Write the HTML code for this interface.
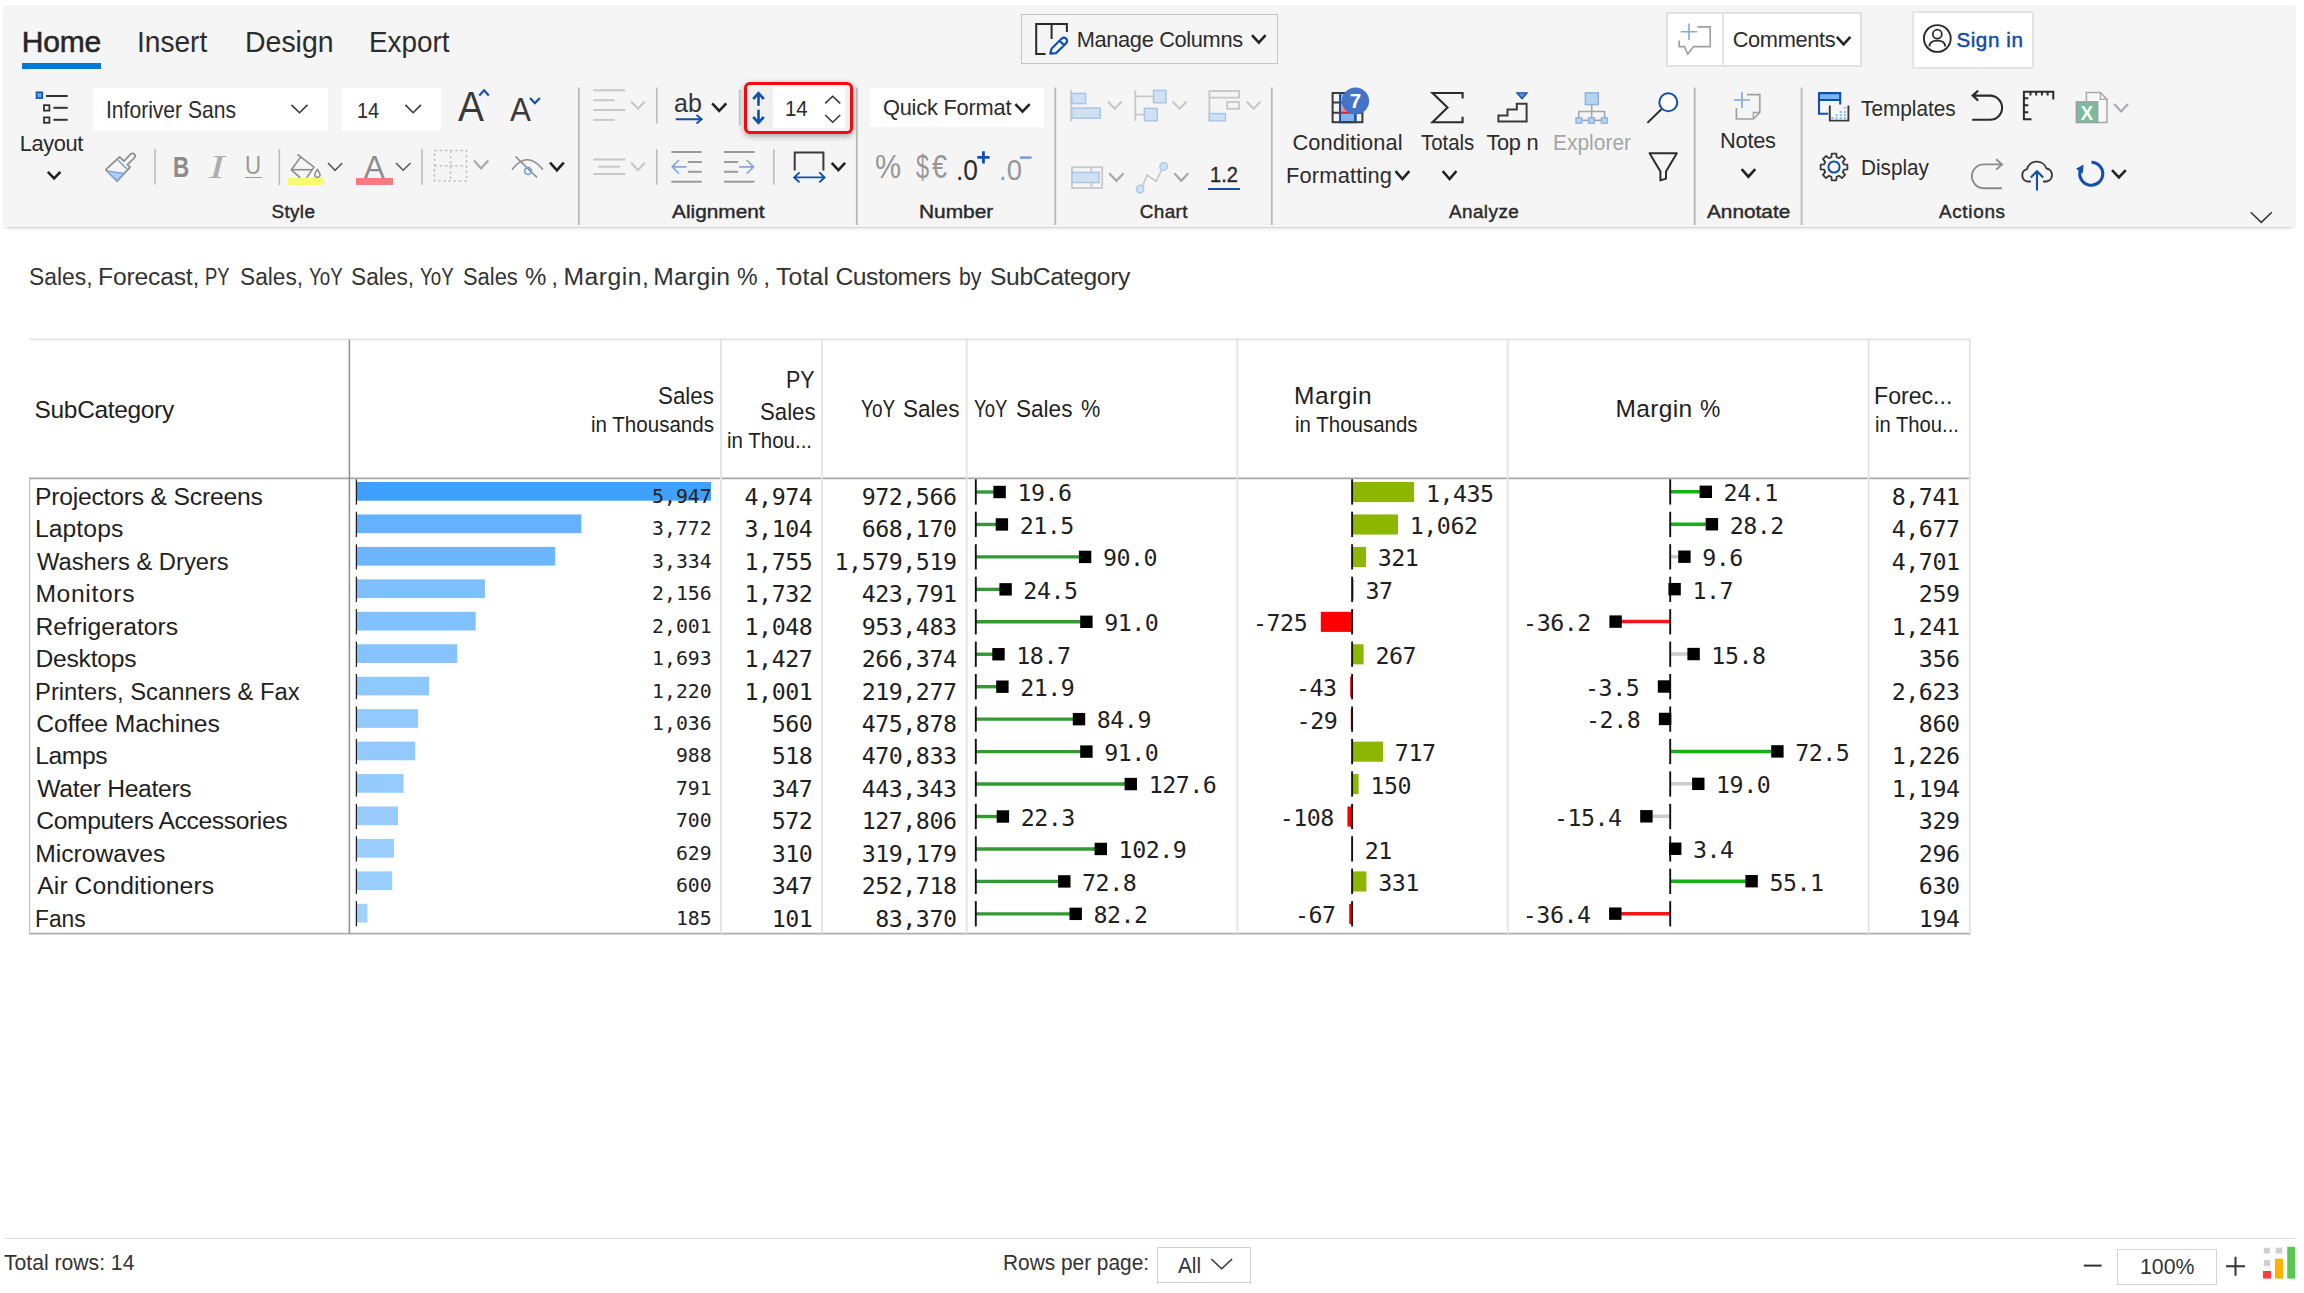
<!DOCTYPE html>
<html lang="en"><head><meta charset="utf-8"><title>Inforiver</title>
<style>
html,body{margin:0;padding:0;background:#fff;overflow:hidden;}
body{width:2304px;height:1293px;position:relative;overflow:hidden;font-family:"Liberation Sans",sans-serif;}
svg{position:absolute;left:0;top:0;overflow:visible}
.t{position:absolute;white-space:nowrap;font-family:"Liberation Sans",sans-serif;color:#2c2c2c}
.m{font-family:"DejaVu Sans Mono","Liberation Mono",monospace}
.sf{font-family:"Liberation Serif",serif}
.b{position:absolute}
</style></head><body>

<header class="ribbon">
<div class="b" style="left:3.9px;top:4.6px;width:2291.4px;height:222.6px;background:#f5f5f5;box-shadow:0 1.2px 1.4px -0.3px rgba(0,0,0,0.21), 0 4px 4px -3px rgba(0,0,0,0.16);"></div>
<div class="t" style="top:22px;font-size:30px;line-height:39px;color:#262626;left:21.70px;-webkit-text-stroke:0.55px #262626;letter-spacing:-0.180px;">Home</div>
<div class="t" style="top:22px;font-size:30px;line-height:39px;left:137.13px;transform:scaleX(0.9363);transform-origin:left center;">Insert</div>
<div class="t" style="top:22px;font-size:30px;line-height:39px;left:244.80px;transform:scaleX(0.9487);transform-origin:left center;">Design</div>
<div class="t" style="top:22px;font-size:30px;line-height:39px;left:368.64px;transform:scaleX(0.9289);transform-origin:left center;">Export</div>
<div class="b" style="left:22px;top:63.3px;width:79px;height:5.5px;background:#0078d4;"></div>
<div class="b" style="left:1021px;top:14px;width:257px;height:50px;border:1px solid #c6c6c6;box-sizing:border-box;"></div>
<div class="t" style="top:26px;font-size:21.8px;line-height:28px;left:1076.70px;letter-spacing:-0.341px;">Manage Columns</div>
<div class="b" style="left:1665.6px;top:12px;width:196.4px;height:54.8px;background:#fff;border:2px solid #e2e2e2;box-sizing:border-box;"></div>
<div class="b" style="left:1722px;top:14px;width:1.6px;height:51px;background:#e4e4e4;"></div>
<div class="t" style="top:26px;font-size:21.8px;line-height:28px;left:1732.70px;letter-spacing:-0.340px;">Comments</div>
<div class="b" style="left:1911.6px;top:10.8px;width:122.6px;height:58px;background:#fff;border:2px solid #e4e4e4;box-sizing:border-box;"></div>
<div class="t" style="top:26px;font-size:20.6px;line-height:27px;color:#0f4ba8;left:1956.40px;-webkit-text-stroke:0.45px #0f4ba8;letter-spacing:0.581px;">Sign in</div>
<div class="b" style="left:93px;top:88px;width:235px;height:42.5px;background:#fff;"></div>
<div class="t" style="top:94px;font-size:23.8px;line-height:31px;left:106.23px;transform:scaleX(0.8853);transform-origin:left center;">Inforiver Sans</div>
<div class="b" style="left:342px;top:88px;width:99px;height:42.5px;background:#fff;"></div>
<div class="t" style="top:96px;font-size:22.6px;line-height:29px;left:357.32px;transform:scaleX(0.8826);transform-origin:left center;">14</div>
<div class="t" style="top:130px;font-size:21.8px;line-height:28px;left:19.80px;letter-spacing:-0.378px;">Layout</div>
<div class="t" style="top:78px;font-size:43px;line-height:56px;color:#3a3a3a;left:458.40px;transform:scaleX(0.9034);transform-origin:left center;">A</div>
<div class="t" style="top:88px;font-size:33px;line-height:43px;color:#3a3a3a;left:510.20px;transform:scaleX(0.95);transform-origin:left center;">A</div>
<div class="t" style="top:147px;font-size:30px;line-height:39px;color:#8c8c8c;font-weight:bold;left:172.51px;transform:scaleX(0.7474);transform-origin:left center;">B</div>
<div class="t sf" style="top:145px;font-size:33.5px;line-height:44px;color:#acacac;font-style:italic;left:208.81px;transform:scaleX(1.4071);transform-origin:left center;">I</div>
<div class="t" style="top:149px;font-size:25.3px;line-height:33px;color:#9a9a9a;left:245.42px;transform:scaleX(0.8812);transform-origin:left center;">U</div>
<div class="b" style="left:244.5px;top:176.5px;width:17.5px;height:1.8px;background:#9a9a9a;"></div>
<div class="t" style="top:148px;font-size:31px;line-height:40px;color:#8c8c8c;left:364.00px;transform:scaleX(1.0);transform-origin:left center;">A</div>
<div class="b" style="left:288px;top:177.6px;width:36.2px;height:7.4px;background:#f8f871;"></div>
<div class="b" style="left:356.4px;top:177.6px;width:36.6px;height:7.4px;background:#fa7a80;"></div>
<div class="t" style="top:87px;font-size:25px;line-height:32px;color:#333;left:674.00px;">ab</div>
<div style="position:absolute;left:743.5px;top:81.5px;width:109.5px;height:52px;box-sizing:border-box;border:3px solid #f20a10;border-radius:6px;background:#f0f0f0;box-shadow:0 2px 6px rgba(0,0,0,0.35);"></div>
<div class="b" style="left:772.5px;top:87px;width:72.5px;height:40.5px;background:#fff;"></div>
<div class="t" style="top:94px;font-size:22px;line-height:29px;left:784.57px;transform:scaleX(0.9253);transform-origin:left center;">14</div>
<div class="b" style="left:869.5px;top:88px;width:174.5px;height:39px;background:#fff;"></div>
<div class="t" style="top:94px;font-size:21.8px;line-height:28px;left:882.90px;letter-spacing:-0.195px;">Quick Format</div>
<div class="t" style="top:145px;font-size:33px;line-height:43px;color:#979797;left:874.51px;transform:scaleX(0.8893);transform-origin:left center;">%</div>
<div class="t" style="top:145px;font-size:33px;line-height:43px;color:#979797;left:915.60px;transform:scaleX(0.7111);transform-origin:left center;">$</div>
<div class="t" style="top:146px;font-size:32.5px;line-height:42px;color:#979797;left:932.00px;transform:scaleX(0.8278);transform-origin:left center;">€</div>
<div class="t" style="top:150px;font-size:30px;line-height:39px;color:#2b2b2b;left:956.04px;transform:scaleX(0.8775);transform-origin:left center;">.0</div>
<div class="t" style="top:150px;font-size:30px;line-height:39px;color:#979797;left:998.86px;transform:scaleX(0.9178);transform-origin:left center;">.0</div>
<div class="t" style="top:161px;font-size:21.8px;line-height:28px;color:#2b2b2b;left:1209.68px;transform:scaleX(0.9185);transform-origin:left center;-webkit-text-stroke:0.35px #2b2b2b;">1.2</div>
<div class="b" style="left:1208.2px;top:187.5px;width:32.2px;height:2.2px;background:#1250aa;"></div>
<div class="t" style="top:129px;font-size:21.8px;line-height:28px;left:1292.40px;letter-spacing:0.108px;">Conditional</div>
<div class="t" style="top:162px;font-size:21.8px;line-height:28px;left:1286.10px;letter-spacing:0.172px;">Formatting</div>
<div class="t" style="top:129px;font-size:21.8px;line-height:28px;left:1421.00px;transform:scaleX(0.9362);transform-origin:left center;">Totals</div>
<div class="t" style="top:129px;font-size:21.8px;line-height:28px;left:1486.40px;letter-spacing:-0.300px;">Top n</div>
<div class="t" style="top:129px;font-size:21.8px;line-height:28px;color:#a6a6a6;left:1553.14px;transform:scaleX(0.9611);transform-origin:left center;">Explorer</div>
<div class="t" style="top:127px;font-size:21.8px;line-height:28px;left:1720.10px;letter-spacing:-0.260px;">Notes</div>
<div class="t" style="top:95px;font-size:21.8px;line-height:28px;left:1861.40px;transform:scaleX(0.9533);transform-origin:left center;">Templates</div>
<div class="t" style="top:154px;font-size:21.8px;line-height:28px;left:1861.05px;transform:scaleX(0.9508);transform-origin:left center;">Display</div>
<div class="t" style="top:199px;font-size:18.9px;line-height:25px;color:#2a2a2a;left:271.60px;-webkit-text-stroke:0.42px #2a2a2a;letter-spacing:0.327px;">Style</div>
<div class="t" style="top:199px;font-size:18.9px;line-height:25px;color:#2a2a2a;left:671.60px;transform:scaleX(1.102);transform-origin:left center;-webkit-text-stroke:0.42px #2a2a2a;">Alignment</div>
<div class="t" style="top:199px;font-size:18.9px;line-height:25px;color:#2a2a2a;left:919.19px;transform:scaleX(1.1063);transform-origin:left center;-webkit-text-stroke:0.42px #2a2a2a;">Number</div>
<div class="t" style="top:199px;font-size:18.9px;line-height:25px;color:#2a2a2a;left:1139.80px;-webkit-text-stroke:0.42px #2a2a2a;letter-spacing:0.389px;">Chart</div>
<div class="t" style="top:199px;font-size:18.9px;line-height:25px;color:#2a2a2a;left:1448.90px;-webkit-text-stroke:0.42px #2a2a2a;letter-spacing:0.450px;">Analyze</div>
<div class="t" style="top:199px;font-size:18.9px;line-height:25px;color:#2a2a2a;left:1707.10px;transform:scaleX(1.1009);transform-origin:left center;-webkit-text-stroke:0.42px #2a2a2a;">Annotate</div>
<div class="t" style="top:199px;font-size:18.9px;line-height:25px;color:#2a2a2a;left:1938.90px;-webkit-text-stroke:0.42px #2a2a2a;letter-spacing:0.700px;">Actions</div>
<svg width="2304" height="1293" viewBox="0 0 2304 1293"><path d="M578.8 87.5 V225" stroke="#b8b8b8" stroke-width="1.8" fill="none"/>
<path d="M856.8 87.5 V225" stroke="#b8b8b8" stroke-width="1.8" fill="none"/>
<path d="M1055.3 87.5 V225" stroke="#b8b8b8" stroke-width="1.8" fill="none"/>
<path d="M1271.8 87.5 V225" stroke="#b8b8b8" stroke-width="1.8" fill="none"/>
<path d="M1694.7 87.5 V225" stroke="#b8b8b8" stroke-width="1.8" fill="none"/>
<path d="M1801.6 87.5 V225" stroke="#b8b8b8" stroke-width="1.8" fill="none"/>
<path d="M155 149 V184.6" stroke="#bdbdbd" stroke-width="1.6" fill="none"/>
<path d="M279.3 149 V185" stroke="#bdbdbd" stroke-width="1.6" fill="none"/>
<path d="M422 149 V185" stroke="#bdbdbd" stroke-width="1.6" fill="none"/>
<path d="M656.8 87.6 V123.4" stroke="#bdbdbd" stroke-width="1.6" fill="none"/>
<path d="M739.7 89.5 V125.3" stroke="#bdbdbd" stroke-width="1.6" fill="none"/>
<path d="M656.8 149.2 V184.8" stroke="#bdbdbd" stroke-width="1.6" fill="none"/>
<path d="M773.8 149.2 V184.8" stroke="#bdbdbd" stroke-width="1.6" fill="none"/>
<rect x="36.5" y="92.3" width="5.8" height="5.8" fill="#6aa3e6" stroke="#1250aa" stroke-width="1.6"/>
<path d="M46 96 H67.7" stroke="#333" stroke-width="2" fill="none"/>
<rect x="44" y="105.2" width="5.4" height="5.4" fill="none" stroke="#333" stroke-width="1.8"/>
<path d="M53.4 107.8 H67.7" stroke="#333" stroke-width="2" fill="none"/>
<rect x="44" y="117.4" width="5.4" height="5.4" fill="none" stroke="#333" stroke-width="1.8"/>
<path d="M53.4 119.8 H67.7" stroke="#333" stroke-width="2" fill="none"/>
<path d="M47.8 171.8 L54.1 178.4 L60.4 171.8" fill="none" stroke="#222" stroke-width="2.6"/>
<path d="M291.5 104.9 L299.5 112.8 L307.5 104.9" fill="none" stroke="#333" stroke-width="1.5"/>
<path d="M405.4 104.9 L413.2 112.8 L421.0 104.9" fill="none" stroke="#333" stroke-width="1.5"/>
<path d="M479.3 95.5 L484.1 90.3 L488.8 95.5" fill="none" stroke="#1250aa" stroke-width="2.2"/>
<path d="M530.0 98.0 L534.9 103.2 L539.8 98.0" fill="none" stroke="#1250aa" stroke-width="2.2"/>
<g fill="none" stroke="#8c8c8c" stroke-width="1.7" stroke-linejoin="round" stroke-linecap="round"><path d="M105.8 169.6 L119.6 156.9 L124 161.2 L130.6 154.2 Q132.6 152.4 134.4 154.2 Q136 156 134.2 158 L127.4 164.6 L130.1 167.1 L117.1 181.2 Z"/></g>
<path d="M117.8 160 L126.9 168.9" fill="none" stroke="#7da2d6" stroke-width="1.5"/>
<path d="M107 170.9 L123.7 173.5 L117.1 180.9 Z" fill="#afcdf0" stroke="#7da2d6" stroke-width="1.3" stroke-linejoin="round"/>
<g fill="none" stroke="#8c8c8c" stroke-width="1.6" stroke-linejoin="round"><path d="M297.4 154.4 L314 167.1 L306.7 177.6 M300.1 177.6 L291.4 169.8 L300.8 156.9"/><path d="M292 169.7 H312.3"/><path d="M317.4 169.4 Q314.3 174 314.8 175.6 Q315.3 177.4 317.4 177.4 Q319.5 177.4 320 175.6 Q320.5 174 317.4 169.4 Z"/></g>
<path d="M328.0 163.0 L335.1 170.3 L342.2 163.0" fill="none" stroke="#555" stroke-width="1.5"/>
<path d="M396.0 163.0 L403.2 170.3 L410.5 163.0" fill="none" stroke="#555" stroke-width="1.5"/>
<g fill="none" stroke="#c4c4c4" stroke-width="1.6" stroke-dasharray="2.6 2.6"><rect x="434.5" y="150.5" width="32" height="30.5"/><path d="M450.5 150.5 V181"/><path d="M434.5 165.8 H466.5"/></g>
<path d="M474.0 160.6 L481.1 168.4 L488.3 160.6" fill="none" stroke="#a8a8a8" stroke-width="2.2"/>
<g fill="none" stroke-linecap="round"><path d="M512.5 169 Q527 150.5 542.5 169" stroke="#8c8c8c" stroke-width="1.7"/><path d="M516 157 L536.5 177" stroke="#8c8c8c" stroke-width="1.7"/><circle cx="528" cy="171" r="3.4" stroke="#6f9fe0" stroke-width="1.6"/></g>
<path d="M550.0 162.6 L556.9 170.2 L563.8 162.6" fill="none" stroke="#222" stroke-width="2.6"/>
<path d="M593.2 90.2 H625.3" stroke="#c8c8c8" stroke-width="2" fill="none"/>
<path d="M593.2 100.2 H614.7" stroke="#c8c8c8" stroke-width="2" fill="none"/>
<path d="M593.2 110.1 H625.3" stroke="#c8c8c8" stroke-width="2" fill="none"/>
<path d="M593.2 119.9 H614.7" stroke="#c8c8c8" stroke-width="2" fill="none"/>
<path d="M631.0 101.5 L638.0 108.7 L644.9 101.5" fill="none" stroke="#c8c8c8" stroke-width="2.2"/>
<path d="M593.2 159.6 H625.3" stroke="#c8c8c8" stroke-width="2" fill="none"/>
<path d="M598.4 166.7 H619.9" stroke="#c8c8c8" stroke-width="2" fill="none"/>
<path d="M593.2 173.9 H625.3" stroke="#c8c8c8" stroke-width="2" fill="none"/>
<path d="M631.0 162.6 L638.0 170.2 L644.9 162.6" fill="none" stroke="#c8c8c8" stroke-width="2.2"/>
<path d="M675.7 119.2 H701.5 M696.5 115 L701.7 119.2 L696.5 123.4" fill="none" stroke="#1250aa" stroke-width="1.9"/>
<path d="M712.2 103.4 L719.2 110.9 L726.3 103.4" fill="none" stroke="#222" stroke-width="2.6"/>
<g fill="none" stroke="#1250aa" stroke-width="2.6"><path d="M758.5 93.5 V105.8 M753.2 99 L758.5 93.2 L763.8 99"/><path d="M758.5 109.8 V122.3 M753.2 117 L758.5 122.8 L763.8 117"/></g>
<path d="M825.2 103.4 L832.7 96.2 L840.2 103.4" fill="none" stroke="#333" stroke-width="1.5"/>
<path d="M825.2 115.0 L832.7 122.2 L840.2 115.0" fill="none" stroke="#333" stroke-width="1.5"/>
<path d="M671.3 152 H701.8" stroke="#9a9a9a" stroke-width="2" fill="none"/>
<path d="M671.3 181.7 H701.8" stroke="#9a9a9a" stroke-width="2" fill="none"/>
<path d="M687.8 162 H701.8" stroke="#9a9a9a" stroke-width="2" fill="none"/>
<path d="M687.8 171.8 H701.8" stroke="#9a9a9a" stroke-width="2" fill="none"/>
<path d="M672.3 166.8 H686.5 M679 160 L672.2 166.8 L679 173.6" fill="none" stroke="#86a8da" stroke-width="1.7"/>
<path d="M724 152 H754.5" stroke="#9a9a9a" stroke-width="2" fill="none"/>
<path d="M724 181.7 H754.5" stroke="#9a9a9a" stroke-width="2" fill="none"/>
<path d="M724 162 H738" stroke="#9a9a9a" stroke-width="2" fill="none"/>
<path d="M724 171.8 H738" stroke="#9a9a9a" stroke-width="2" fill="none"/>
<path d="M739 166.8 H753.4 M746.7 160 L753.6 166.8 L746.7 173.6" fill="none" stroke="#86a8da" stroke-width="1.7"/>
<path d="M794.7 170.5 V152.6 H823.4 V170.5" fill="none" stroke="#3a3a3a" stroke-width="2"/>
<path d="M794.5 177.4 H824.3 M799.5 172.4 L794.2 177.4 L799.5 182.4 M819.3 172.4 L824.6 177.4 L819.3 182.4" fill="none" stroke="#1250aa" stroke-width="1.9"/>
<path d="M831.7 162.9 L838.4 170.2 L845.1 162.9" fill="none" stroke="#222" stroke-width="2.6"/>
<path d="M1015.4 104.1 L1022.5 111.6 L1029.7 104.1" fill="none" stroke="#222" stroke-width="2.6"/>
<path d="M977.3 157.4 H989.6 M983.45 151.3 V163.6" stroke="#1250aa" stroke-width="2.8" fill="none"/>
<path d="M1020 157.6 H1031.6" stroke="#7da0d8" stroke-width="2.6" fill="none"/>
<path d="M1071 89.5 V121.4" stroke="#c8c8c8" stroke-width="1.6" fill="none"/>
<rect x="1071.8" y="93.4" width="13.8" height="10.2" fill="#cfe0f3" stroke="#a9c6e8" stroke-width="1.5"/>
<rect x="1071.8" y="108" width="28.4" height="10.2" fill="#cfe0f3" stroke="#a9c6e8" stroke-width="1.5"/>
<path d="M1108.0 101.5 L1114.8 108.7 L1121.6 101.5" fill="none" stroke="#c8c8c8" stroke-width="2.2"/>
<path d="M1135.3 90.2 V120.8 M1135.3 96.4 H1152.9 M1135.3 114.7 H1143.8" stroke="#c8c8c8" stroke-width="1.8" fill="none"/>
<rect x="1153.5" y="90.4" width="12.5" height="12.4" fill="#cfe0f3" stroke="#a9c6e8" stroke-width="1.5"/>
<rect x="1144.4" y="108.4" width="12.8" height="12.4" fill="#cfe0f3" stroke="#a9c6e8" stroke-width="1.5"/>
<path d="M1172.4 101.5 L1179.6 108.7 L1186.7 101.5" fill="none" stroke="#c8c8c8" stroke-width="2.2"/>
<path d="M1209.4 121 V91 H1239 V97.6 H1209.4" stroke="#c8c8c8" stroke-width="1.9" fill="none"/>
<rect x="1227.2" y="102" width="11.8" height="6.8" fill="none" stroke="#c8c8c8" stroke-width="1.9"/>
<rect x="1209.4" y="113.6" width="16.0" height="7.2" fill="#cfe0f3" stroke="#a9c6e8" stroke-width="1.5"/>
<path d="M1246.6 101.5 L1253.7 108.7 L1260.7 101.5" fill="none" stroke="#c8c8c8" stroke-width="2.2"/>
<rect x="1072" y="167.2" width="30.2" height="20.8" fill="none" stroke="#c8c8c8" stroke-width="1.8"/>
<path d="M1091.4 167.2 V188" stroke="#c8c8c8" stroke-width="1.8"/>
<rect x="1072" y="172.4" width="27.0" height="10.2" fill="#cfe0f3" stroke="#a9c6e8" stroke-width="1.5"/>
<path d="M1109.2 173.3 L1116.4 180.8 L1123.6 173.3" fill="none" stroke="#a8a8a8" stroke-width="2.2"/>
<path d="M1142.5 186 L1147 175 L1156.1 181.3 L1161.8 169.5" stroke="#c8c8c8" stroke-width="1.7" fill="none"/>
<circle cx="1140.1" cy="189.1" r="3.8" fill="#cfe0f3" stroke="#a9c6e8" stroke-width="1.4"/><circle cx="1163.7" cy="166.4" r="3.8" fill="#cfe0f3" stroke="#a9c6e8" stroke-width="1.4"/>
<path d="M1174.3 173.3 L1181.3 180.8 L1188.3 173.3" fill="none" stroke="#a8a8a8" stroke-width="2.2"/>
<rect x="1340" y="93" width="15.4" height="29.2" fill="#7ab6ee" stroke="#1250aa" stroke-width="2"/>
<rect x="1340" y="102.6" width="15.4" height="10.1" fill="#f58a8a" stroke="#e02020" stroke-width="2"/>
<g fill="none" stroke="#3a3a3a" stroke-width="2"><rect x="1332.6" y="93" width="29.8" height="29.2"/><path d="M1332.6 102.6 H1340 M1355.4 102.6 H1362.4 M1332.6 112.7 H1340 M1355.4 112.7 H1362.4"/></g>
<path d="M1340 93 V122.2 M1355.4 93 V122.2" stroke="#1250aa" stroke-width="2" fill="none"/>
<circle cx="1355.5" cy="101" r="13.6" fill="#4573c8"/>
<path d="M1395.6 171.2 L1402.4 179.0 L1409.3 171.2" fill="none" stroke="#222" stroke-width="2.6"/>
<path d="M1462.6 98.5 V93 H1432.5 L1447.5 107.6 L1432.5 122.3 H1462.6 V116.8" fill="none" stroke="#2b2b2b" stroke-width="2.1" stroke-linejoin="miter"/>
<path d="M1442.7 171.2 L1449.6 179.0 L1456.4 171.2" fill="none" stroke="#222" stroke-width="2.6"/>
<path d="M1498.4 121.5 V115.4 H1507.5 V109.6 H1516.8 V103.8 H1526.6 V121.5 Z" fill="none" stroke="#3a3a3a" stroke-width="2"/>
<path d="M1517 92.9 H1527 L1522 98.7 Z" fill="#5b93e0" stroke="#1250aa" stroke-width="1.4"/>
<rect x="1585.4" y="92.8" width="12.8" height="11.8" fill="#b6d3f2" stroke="#8fb2e2" stroke-width="1.5"/>
<path d="M1591.7 105 V118 M1578.8 118 V111.5 H1604.6 V118 M1582 120.4 H1601" stroke="#a8a8a8" stroke-width="1.6" fill="none"/>
<rect x="1576" y="117.8" width="5.8" height="5.4" fill="#b6d3f2" stroke="#8fb2e2" stroke-width="1.4"/>
<rect x="1588.6" y="117.8" width="5.8" height="5.4" fill="#b6d3f2" stroke="#8fb2e2" stroke-width="1.4"/>
<rect x="1601.4" y="117.8" width="5.8" height="5.4" fill="#b6d3f2" stroke="#8fb2e2" stroke-width="1.4"/>
<path d="M1661.4 109.2 L1647.4 122.9" stroke="#2b2b2b" stroke-width="2" fill="none"/><circle cx="1668.3" cy="102.3" r="9" fill="#fff" stroke="#1250aa" stroke-width="2"/>
<path d="M1649.6 153.2 H1676.8 L1666 171.4 V178.6 L1660.4 180.4 V171.4 Z" fill="none" stroke="#2b2b2b" stroke-width="2" stroke-linejoin="round"/>
<path d="M1747 94.6 H1759.8 V112.5 L1753.4 119 H1736.4 V108" fill="none" stroke="#a0a0a0" stroke-width="1.7"/><path d="M1759.8 112.5 H1753.4 V119" fill="none" stroke="#a0a0a0" stroke-width="1.4"/>
<path d="M1734 100 H1750 M1742 92 V108" stroke="#86a8da" stroke-width="1.7" fill="none"/>
<path d="M1741.6 169.2 L1748.4 176.7 L1755.3 169.2" fill="none" stroke="#222" stroke-width="2.6"/>
<rect x="1819" y="93.1" width="21.2" height="6.9" fill="#7ab6ee" stroke="none" stroke-width="1.5"/>
<path d="M1828.2 113.8 H1819 V93.1 H1840.2 V104.6 M1819 100 H1840.2" fill="none" stroke="#1250aa" stroke-width="2.1"/>
<path d="M1829.8 105.5 V120.6 H1848.4 V105.5" fill="none" stroke="#3a3a3a" stroke-width="1.9"/>
<g fill="#7fb2ee"><rect x="1831.5" y="117.1" width="1.8" height="1.8"/><rect x="1835.7" y="114.2" width="1.8" height="1.8"/><rect x="1835.7" y="117.1" width="1.8" height="1.8"/><rect x="1839.8" y="111.1" width="1.8" height="1.8"/><rect x="1839.8" y="114.2" width="1.8" height="1.8"/><rect x="1839.8" y="117.1" width="1.8" height="1.8"/><rect x="1844.0" y="106.9" width="1.8" height="1.8"/><rect x="1844.0" y="111.1" width="1.8" height="1.8"/><rect x="1844.0" y="114.2" width="1.8" height="1.8"/><rect x="1844.0" y="117.1" width="1.8" height="1.8"/></g>
<path d="M1831.4 157.1 L1831.7 153.6 L1836.3 153.6 L1836.6 157.1 L1839.1 158.2 L1841.9 155.9 L1845.1 159.1 L1842.8 161.9 L1843.9 164.4 L1847.4 164.7 L1847.4 169.3 L1843.9 169.6 L1842.8 172.1 L1845.1 174.9 L1841.9 178.1 L1839.1 175.8 L1836.6 176.9 L1836.3 180.4 L1831.7 180.4 L1831.4 176.9 L1828.9 175.8 L1826.1 178.1 L1822.9 174.9 L1825.2 172.1 L1824.1 169.6 L1820.6 169.3 L1820.6 164.7 L1824.1 164.4 L1825.2 161.9 L1822.9 159.1 L1826.1 155.9 L1828.9 158.2 Z" fill="none" stroke="#3a3a3a" stroke-width="1.8" stroke-linejoin="round"/>
<circle cx="1834" cy="167" r="5.6" fill="none" stroke="#1250aa" stroke-width="2"/>
<path d="M1973 95.6 H1990 A12.1 12.1 0 0 1 1990 119.8 H1972.2 M1978.2 90.6 L1972.6 95.6 L1978.2 100.6" fill="none" stroke="#2b2b2b" stroke-width="2.1"/>
<path d="M2001.8 164.4 H1983.8 A11.9 11.9 0 0 0 1983.8 188.2 H2002 M1996.2 159.2 L2002 164.4 L1996.2 169.6" fill="none" stroke="#8c8c8c" stroke-width="1.9"/>
<path d="M2023.9 120.2 V91.8 H2053.3 V99.5 M2023.9 119.3 H2031.5 M2023.9 112.3 H2028.3 M2023.9 105.3 H2028.3 M2023.9 98.3 H2028.3 M2030.5 91.8 V95.4 M2036.2 91.8 V95.4 M2041.9 91.8 V95.4 M2047.6 91.8 V95.4" fill="none" stroke="#2b2b2b" stroke-width="2"/>
<path d="M2031 181.5 H2027.5 A6.3 6.3 0 0 1 2027 169.2 A10.2 10.2 0 0 1 2046.5 168.5 A6.6 6.6 0 0 1 2046.6 181.5 H2043" fill="none" stroke="#3a3a3a" stroke-width="1.9"/>
<path d="M2037 190.4 V171.5 M2030.8 177.6 L2037 171.2 L2043.2 177.6" fill="none" stroke="#1250aa" stroke-width="2.1"/>
<path d="M2086.4 101 V92.6 H2100.4 L2107 99.4 V122.5 H2098" fill="#f7f7f7" stroke="#a8a8a8" stroke-width="1.5"/><path d="M2100.4 92.6 V99.4 H2107" fill="none" stroke="#a8a8a8" stroke-width="1.3"/>
<rect x="2076.4" y="101.9" width="21.2" height="20.6" fill="#7cbb9f" stroke="#a0a0a0" stroke-width="1.6"/>
<path d="M2114.2 104.0 L2121.1 111.5 L2128.0 104.0" fill="none" stroke="#a8aab0" stroke-width="2.2"/>
<path d="M2091.5 162.2 A11.5 11.5 0 1 1 2080.4 169.9" fill="none" stroke="#1250aa" stroke-width="3.1"/><path d="M2076 168.7 L2083.6 164.6 L2082.8 173.4 Z" fill="#1250aa"/>
<path d="M2112.0 170.2 L2118.9 177.4 L2125.8 170.2" fill="none" stroke="#222" stroke-width="2.6"/>
<path d="M2250.8 212.3 L2261.3 222.4 L2271.8 212.3" fill="none" stroke="#333" stroke-width="1.5"/>
<path d="M1045.6 54 H1036.2 V24 H1066.9 V31.9 M1051.6 24 V39" fill="none" stroke="#2b2b2b" stroke-width="2"/>
<path d="M1050.3 53.6 L1051.5 48.8 L1061.5 38.8 Q1064 36.6 1066.2 38.8 Q1068.2 41 1066 43.4 L1056 53.2 Z M1059.6 40.8 L1064.2 45.4" fill="none" stroke="#1250aa" stroke-width="2.2" stroke-linejoin="round"/>
<path d="M1252.0 35.1 L1258.8 42.6 L1265.6 35.1" fill="none" stroke="#222" stroke-width="2.6"/>
<path d="M1697.5 26.8 H1710.2 V46.6 H1693.6 L1687.8 54 L1684.4 46.6 H1679.2 V40.5" fill="none" stroke="#a0a0a0" stroke-width="1.7"/>
<path d="M1680.8 31.8 H1697 M1689 23.6 V40" stroke="#86a8da" stroke-width="1.6" fill="none"/>
<path d="M1836.8 36.8 L1843.6 44.4 L1850.4 36.8" fill="none" stroke="#222" stroke-width="2.5"/>
<circle cx="1937.3" cy="38.5" r="13.4" fill="none" stroke="#2b2b2b" stroke-width="1.9"/><circle cx="1937.3" cy="34.2" r="4.5" fill="none" stroke="#2b2b2b" stroke-width="1.8"/><path d="M1929.5 46.5 Q1929.5 40.6 1937.3 40.6 Q1945.1 40.6 1945.1 46.5" fill="none" stroke="#2b2b2b" stroke-width="1.8"/></svg>
<div class="t" style="top:87px;font-size:20.5px;line-height:27px;color:#fff;font-weight:bold;left:1255.50px;width:200px;text-align:center;">7</div>
<div class="t" style="top:101px;font-size:19.5px;line-height:25px;color:#fff;font-weight:bold;left:1986.90px;width:200px;text-align:center;transform:scaleX(0.95);transform-origin:center center;">X</div>
</header>
<main class="report">
<svg width="2304" height="1293" viewBox="0 0 2304 1293" fill="none"><path d="M29 339.4 H1970.5" stroke="#e3e3e3" stroke-width="1.8"/>
<path d="M29 478.4 H1970.5" stroke="#a6a6a6" stroke-width="1.6"/>
<path d="M29 933.6 H1970.5" stroke="#b0b0b0" stroke-width="1.6"/>
<path d="M29.6 478.4 V933.6" stroke="#c8c8c8" stroke-width="1.4"/>
<path d="M349.4 339.4 V933.6" stroke="#8f8f8f" stroke-width="1.5"/>
<path d="M721.1 339.4 V933.6" stroke="#e3e3e3" stroke-width="1.8"/>
<path d="M822.1 339.4 V933.6" stroke="#e3e3e3" stroke-width="1.8"/>
<path d="M966.7 339.4 V933.6" stroke="#e3e3e3" stroke-width="1.8"/>
<path d="M1237.3 339.4 V933.6" stroke="#e3e3e3" stroke-width="1.8"/>
<path d="M1507.6 339.4 V933.6" stroke="#e3e3e3" stroke-width="1.8"/>
<path d="M1868.6 339.4 V933.6" stroke="#e3e3e3" stroke-width="1.8"/>
<path d="M1969.8 339.4 V933.6" stroke="#e3e3e3" stroke-width="1.8"/>
<rect x="356.7" y="482.00" width="354.3" height="18.7" fill="rgb(64, 160, 255)"/>
<path d="M356.4 479.30 V504.60" stroke="#222" stroke-width="1.3"/>
<path d="M975.8 492.00 H999.6" stroke="#339a33" stroke-width="3.4"/>
<path d="M975.8 479.30 V504.60" stroke="#111" stroke-width="1.9"/>
<rect x="993.4" y="485.80" width="12.4" height="12.4" fill="#000"/>
<rect x="1352.1" y="482.00" width="62.0" height="20.1" fill="#8db600"/>
<path d="M1352.1 479.30 V504.60" stroke="#111" stroke-width="1.9"/>
<path d="M1670.2 491.80 H1705.8" stroke="#16b116" stroke-width="3.5"/>
<path d="M1670.2 479.30 V504.60" stroke="#111" stroke-width="1.9"/>
<rect x="1699.6" y="485.60" width="12.4" height="12.4" fill="#000"/>
<rect x="356.7" y="514.45" width="224.6" height="18.7" fill="rgb(100, 178, 255)"/>
<path d="M356.4 511.75 V537.05" stroke="#222" stroke-width="1.3"/>
<path d="M975.8 524.45 H1001.9" stroke="#339a33" stroke-width="3.4"/>
<path d="M975.8 511.75 V537.05" stroke="#111" stroke-width="1.9"/>
<rect x="995.7" y="518.25" width="12.4" height="12.4" fill="#000"/>
<rect x="1352.1" y="514.45" width="45.9" height="20.1" fill="#8db600"/>
<path d="M1352.1 511.75 V537.05" stroke="#111" stroke-width="1.9"/>
<path d="M1670.2 524.25 H1711.9" stroke="#16b116" stroke-width="3.5"/>
<path d="M1670.2 511.75 V537.05" stroke="#111" stroke-width="1.9"/>
<rect x="1705.7" y="518.05" width="12.4" height="12.4" fill="#000"/>
<rect x="356.7" y="546.90" width="198.5" height="18.7" fill="rgb(108, 182, 255)"/>
<path d="M356.4 544.20 V569.50" stroke="#222" stroke-width="1.3"/>
<path d="M975.8 556.90 H1085.1" stroke="#339a33" stroke-width="3.4"/>
<path d="M975.8 544.20 V569.50" stroke="#111" stroke-width="1.9"/>
<rect x="1078.9" y="550.70" width="12.4" height="12.4" fill="#000"/>
<rect x="1352.1" y="546.90" width="13.9" height="20.1" fill="#8db600"/>
<path d="M1352.1 544.20 V569.50" stroke="#111" stroke-width="1.9"/>
<path d="M1670.2 556.70 H1684.4" stroke="#cbcbcb" stroke-width="3.5"/>
<path d="M1670.2 544.20 V569.50" stroke="#111" stroke-width="1.9"/>
<rect x="1678.2" y="550.50" width="12.4" height="12.4" fill="#000"/>
<rect x="356.7" y="579.35" width="128.2" height="18.7" fill="rgb(127, 191, 255)"/>
<path d="M356.4 576.65 V601.95" stroke="#222" stroke-width="1.3"/>
<path d="M975.8 589.35 H1005.6" stroke="#339a33" stroke-width="3.4"/>
<path d="M975.8 576.65 V601.95" stroke="#111" stroke-width="1.9"/>
<rect x="999.4" y="583.15" width="12.4" height="12.4" fill="#000"/>
<rect x="1352.1" y="579.35" width="1.6" height="20.1" fill="#8db600"/>
<path d="M1352.1 576.65 V601.95" stroke="#111" stroke-width="1.9"/>
<path d="M1670.2 589.15 H1674.6" stroke="#cbcbcb" stroke-width="3.5"/>
<path d="M1670.2 576.65 V601.95" stroke="#111" stroke-width="1.9"/>
<rect x="1668.4" y="582.95" width="12.4" height="12.4" fill="#000"/>
<rect x="356.7" y="611.80" width="119.0" height="18.7" fill="rgb(130, 193, 255)"/>
<path d="M356.4 609.10 V634.40" stroke="#222" stroke-width="1.3"/>
<path d="M975.8 621.80 H1086.4" stroke="#339a33" stroke-width="3.4"/>
<path d="M975.8 609.10 V634.40" stroke="#111" stroke-width="1.9"/>
<rect x="1080.2" y="615.60" width="12.4" height="12.4" fill="#000"/>
<rect x="1320.8" y="611.80" width="31.3" height="20.1" fill="#ff0000"/>
<path d="M1352.1 609.10 V634.40" stroke="#111" stroke-width="1.9"/>
<path d="M1670.2 621.60 H1615.6" stroke="#f41616" stroke-width="3.5"/>
<path d="M1670.2 609.10 V634.40" stroke="#111" stroke-width="1.9"/>
<rect x="1609.4" y="615.40" width="12.4" height="12.4" fill="#000"/>
<rect x="356.7" y="644.25" width="100.6" height="18.7" fill="rgb(135, 195, 255)"/>
<path d="M356.4 641.55 V666.85" stroke="#222" stroke-width="1.3"/>
<path d="M975.8 654.25 H998.5" stroke="#339a33" stroke-width="3.4"/>
<path d="M975.8 641.55 V666.85" stroke="#111" stroke-width="1.9"/>
<rect x="992.3" y="648.05" width="12.4" height="12.4" fill="#000"/>
<rect x="1352.1" y="644.25" width="11.5" height="20.1" fill="#8db600"/>
<path d="M1352.1 641.55 V666.85" stroke="#111" stroke-width="1.9"/>
<path d="M1670.2 654.05 H1693.6" stroke="#cbcbcb" stroke-width="3.5"/>
<path d="M1670.2 641.55 V666.85" stroke="#111" stroke-width="1.9"/>
<rect x="1687.4" y="647.85" width="12.4" height="12.4" fill="#000"/>
<rect x="356.7" y="676.70" width="72.4" height="18.7" fill="rgb(143, 199, 255)"/>
<path d="M356.4 674.00 V699.30" stroke="#222" stroke-width="1.3"/>
<path d="M975.8 686.70 H1002.4" stroke="#339a33" stroke-width="3.4"/>
<path d="M975.8 674.00 V699.30" stroke="#111" stroke-width="1.9"/>
<rect x="996.2" y="680.50" width="12.4" height="12.4" fill="#000"/>
<rect x="1350.2" y="676.70" width="1.9" height="20.1" fill="#ff0000"/>
<path d="M1352.1 674.00 V699.30" stroke="#111" stroke-width="1.9"/>
<path d="M1670.2 686.50 H1664.0" stroke="#cbcbcb" stroke-width="3.5"/>
<path d="M1670.2 674.00 V699.30" stroke="#111" stroke-width="1.9"/>
<rect x="1657.8" y="680.30" width="12.4" height="12.4" fill="#000"/>
<rect x="356.7" y="709.15" width="61.5" height="18.7" fill="rgb(146, 201, 255)"/>
<path d="M356.4 706.45 V731.75" stroke="#222" stroke-width="1.3"/>
<path d="M975.8 719.15 H1079.0" stroke="#339a33" stroke-width="3.4"/>
<path d="M975.8 706.45 V731.75" stroke="#111" stroke-width="1.9"/>
<rect x="1072.8" y="712.95" width="12.4" height="12.4" fill="#000"/>
<rect x="1350.8" y="709.15" width="1.3" height="20.1" fill="#ff0000"/>
<path d="M1352.1 706.45 V731.75" stroke="#111" stroke-width="1.9"/>
<path d="M1670.2 718.95 H1665.1" stroke="#cbcbcb" stroke-width="3.5"/>
<path d="M1670.2 706.45 V731.75" stroke="#111" stroke-width="1.9"/>
<rect x="1658.9" y="712.75" width="12.4" height="12.4" fill="#000"/>
<rect x="356.7" y="741.60" width="58.6" height="18.7" fill="rgb(147, 201, 255)"/>
<path d="M356.4 738.90 V764.20" stroke="#222" stroke-width="1.3"/>
<path d="M975.8 751.60 H1086.4" stroke="#339a33" stroke-width="3.4"/>
<path d="M975.8 738.90 V764.20" stroke="#111" stroke-width="1.9"/>
<rect x="1080.2" y="745.40" width="12.4" height="12.4" fill="#000"/>
<rect x="1352.1" y="741.60" width="31.0" height="20.1" fill="#8db600"/>
<path d="M1352.1 738.90 V764.20" stroke="#111" stroke-width="1.9"/>
<path d="M1670.2 751.40 H1777.4" stroke="#16b116" stroke-width="3.5"/>
<path d="M1670.2 738.90 V764.20" stroke="#111" stroke-width="1.9"/>
<rect x="1771.2" y="745.20" width="12.4" height="12.4" fill="#000"/>
<rect x="356.7" y="774.05" width="46.9" height="18.7" fill="rgb(150, 203, 255)"/>
<path d="M356.4 771.35 V796.65" stroke="#222" stroke-width="1.3"/>
<path d="M975.8 784.05 H1130.8" stroke="#339a33" stroke-width="3.4"/>
<path d="M975.8 771.35 V796.65" stroke="#111" stroke-width="1.9"/>
<rect x="1124.6" y="777.85" width="12.4" height="12.4" fill="#000"/>
<rect x="1352.1" y="774.05" width="6.5" height="20.1" fill="#8db600"/>
<path d="M1352.1 771.35 V796.65" stroke="#111" stroke-width="1.9"/>
<path d="M1670.2 783.85 H1698.3" stroke="#cbcbcb" stroke-width="3.5"/>
<path d="M1670.2 771.35 V796.65" stroke="#111" stroke-width="1.9"/>
<rect x="1692.1" y="777.65" width="12.4" height="12.4" fill="#000"/>
<rect x="356.7" y="806.50" width="41.4" height="18.7" fill="rgb(152, 204, 255)"/>
<path d="M356.4 803.80 V829.10" stroke="#222" stroke-width="1.3"/>
<path d="M975.8 816.50 H1002.9" stroke="#339a33" stroke-width="3.4"/>
<path d="M975.8 803.80 V829.10" stroke="#111" stroke-width="1.9"/>
<rect x="996.7" y="810.30" width="12.4" height="12.4" fill="#000"/>
<rect x="1347.4" y="806.50" width="4.7" height="20.1" fill="#ff0000"/>
<path d="M1352.1 803.80 V829.10" stroke="#111" stroke-width="1.9"/>
<path d="M1670.2 816.30 H1646.4" stroke="#cbcbcb" stroke-width="3.5"/>
<path d="M1670.2 803.80 V829.10" stroke="#111" stroke-width="1.9"/>
<rect x="1640.2" y="810.10" width="12.4" height="12.4" fill="#000"/>
<rect x="356.7" y="838.95" width="37.2" height="18.7" fill="rgb(153, 204, 255)"/>
<path d="M356.4 836.25 V861.55" stroke="#222" stroke-width="1.3"/>
<path d="M975.8 848.95 H1100.8" stroke="#339a33" stroke-width="3.4"/>
<path d="M975.8 836.25 V861.55" stroke="#111" stroke-width="1.9"/>
<rect x="1094.6" y="842.75" width="12.4" height="12.4" fill="#000"/>
<rect x="1352.1" y="838.95" width="0.9" height="20.1" fill="#8db600"/>
<path d="M1352.1 836.25 V861.55" stroke="#111" stroke-width="1.9"/>
<path d="M1670.2 848.75 H1675.2" stroke="#cbcbcb" stroke-width="3.5"/>
<path d="M1670.2 836.25 V861.55" stroke="#111" stroke-width="1.9"/>
<rect x="1669.0" y="842.55" width="12.4" height="12.4" fill="#000"/>
<rect x="356.7" y="871.40" width="35.5" height="18.7" fill="rgb(153, 204, 255)"/>
<path d="M356.4 868.70 V894.00" stroke="#222" stroke-width="1.3"/>
<path d="M975.8 881.40 H1064.3" stroke="#339a33" stroke-width="3.4"/>
<path d="M975.8 868.70 V894.00" stroke="#111" stroke-width="1.9"/>
<rect x="1058.1" y="875.20" width="12.4" height="12.4" fill="#000"/>
<rect x="1352.1" y="871.40" width="14.3" height="20.1" fill="#8db600"/>
<path d="M1352.1 868.70 V894.00" stroke="#111" stroke-width="1.9"/>
<path d="M1670.2 881.20 H1751.6" stroke="#16b116" stroke-width="3.5"/>
<path d="M1670.2 868.70 V894.00" stroke="#111" stroke-width="1.9"/>
<rect x="1745.4" y="875.00" width="12.4" height="12.4" fill="#000"/>
<rect x="356.7" y="903.85" width="10.7" height="18.7" fill="rgb(160, 208, 255)"/>
<path d="M356.4 901.15 V926.45" stroke="#222" stroke-width="1.3"/>
<path d="M975.8 913.85 H1075.7" stroke="#339a33" stroke-width="3.4"/>
<path d="M975.8 901.15 V926.45" stroke="#111" stroke-width="1.9"/>
<rect x="1069.5" y="907.65" width="12.4" height="12.4" fill="#000"/>
<rect x="1349.2" y="903.85" width="2.9" height="20.1" fill="#ff0000"/>
<path d="M1352.1 901.15 V926.45" stroke="#111" stroke-width="1.9"/>
<path d="M1670.2 913.65 H1615.3" stroke="#f41616" stroke-width="3.5"/>
<path d="M1670.2 901.15 V926.45" stroke="#111" stroke-width="1.9"/>
<rect x="1609.1" y="907.45" width="12.4" height="12.4" fill="#000"/></svg>
<h1 class="title" style="margin:0;font-weight:normal;font-size:inherit">
<span class="t" style="top:261px;font-size:24.7px;line-height:32px;color:#333;left:29.17px;transform:scaleX(0.9262);transform-origin:left center;white-space:pre;">Sales, </span>
<span class="t" style="top:261px;font-size:24.7px;line-height:32px;color:#333;left:98.00px;letter-spacing:-0.192px;white-space:pre;">Forecast, </span>
<span class="t" style="top:261px;font-size:24.7px;line-height:32px;color:#333;left:204.81px;transform:scaleX(0.7451);transform-origin:left center;white-space:pre;">PY </span>
<span class="t" style="top:261px;font-size:24.7px;line-height:32px;color:#333;left:240.08px;transform:scaleX(0.9201);transform-origin:left center;white-space:pre;">Sales, </span>
<span class="t" style="top:261px;font-size:24.7px;line-height:32px;color:#333;left:309.00px;transform:scaleX(0.758);transform-origin:left center;white-space:pre;">YoY </span>
<span class="t" style="top:261px;font-size:24.7px;line-height:32px;color:#333;left:351.38px;transform:scaleX(0.9186);transform-origin:left center;white-space:pre;">Sales, </span>
<span class="t" style="top:261px;font-size:24.7px;line-height:32px;color:#333;left:420.30px;transform:scaleX(0.758);transform-origin:left center;white-space:pre;">YoY </span>
<span class="t" style="top:261px;font-size:24.7px;line-height:32px;color:#333;left:462.71px;transform:scaleX(0.8873);transform-origin:left center;white-space:pre;">Sales </span>
<span class="t" style="top:261px;font-size:24.7px;line-height:32px;color:#333;left:524.80px;transform:scaleX(0.9727);transform-origin:left center;white-space:pre;">% </span>
<span class="t" style="top:261px;font-size:24.7px;line-height:32px;color:#333;left:551.20px;white-space:pre;">, </span>
<span class="t" style="top:261px;font-size:24.7px;line-height:32px;color:#333;left:563.50px;letter-spacing:0.490px;white-space:pre;">Margin, </span>
<span class="t" style="top:261px;font-size:24.7px;line-height:32px;color:#333;left:653.20px;letter-spacing:0.254px;white-space:pre;">Margin </span>
<span class="t" style="top:261px;font-size:24.7px;line-height:32px;color:#333;left:737.00px;transform:scaleX(0.9364);transform-origin:left center;white-space:pre;">% </span>
<span class="t" style="top:261px;font-size:24.7px;line-height:32px;color:#333;left:763.20px;white-space:pre;">, </span>
<span class="t" style="top:261px;font-size:24.7px;line-height:32px;color:#333;left:776.00px;letter-spacing:0.185px;white-space:pre;">Total </span>
<span class="t" style="top:261px;font-size:24.7px;line-height:32px;color:#333;left:835.40px;letter-spacing:-0.463px;white-space:pre;">Customers </span>
<span class="t" style="top:261px;font-size:24.7px;line-height:32px;color:#333;left:959.44px;transform:scaleX(0.8628);transform-origin:left center;white-space:pre;">by </span>
<span class="t" style="top:261px;font-size:24.7px;line-height:32px;color:#333;left:990.00px;letter-spacing:-0.376px;">SubCategory</span>
</h1>
<div class="t" style="top:394px;font-size:24.5px;line-height:32px;color:#1f1f1f;left:34.60px;letter-spacing:-0.345px;">SubCategory</div>
<div class="t" style="top:380px;font-size:24.5px;line-height:32px;color:#1f1f1f;left:658.39px;transform:scaleX(0.9111);transform-origin:left center;">Sales</div>
<div class="t" style="top:410px;font-size:22.4px;line-height:29px;color:#1f1f1f;left:591.08px;transform:scaleX(0.9172);transform-origin:left center;">in Thousands</div>
<div class="t" style="top:364px;font-size:24.5px;line-height:32px;color:#1f1f1f;left:785.95px;transform:scaleX(0.8767);transform-origin:left center;">PY</div>
<div class="t" style="top:396px;font-size:24.5px;line-height:32px;color:#1f1f1f;left:759.59px;transform:scaleX(0.9061);transform-origin:left center;">Sales</div>
<div class="t" style="top:426px;font-size:22.4px;line-height:29px;color:#1f1f1f;left:727.18px;transform:scaleX(0.9152);transform-origin:left center;">in Thou...</div>
<div class="t" style="top:393px;font-size:24.5px;line-height:32px;color:#1f1f1f;left:861.30px;transform:scaleX(0.7731);transform-origin:left center;white-space:pre;">YoY </div>
<div class="t" style="top:393px;font-size:24.5px;line-height:32px;color:#1f1f1f;left:903.38px;transform:scaleX(0.9211);transform-origin:left center;">Sales</div>
<div class="t" style="top:393px;font-size:24.5px;line-height:32px;color:#1f1f1f;left:973.90px;transform:scaleX(0.7548);transform-origin:left center;white-space:pre;">YoY </div>
<div class="t" style="top:393px;font-size:24.5px;line-height:32px;color:#1f1f1f;left:1015.98px;transform:scaleX(0.9211);transform-origin:left center;white-space:pre;">Sales </div>
<div class="t" style="top:393px;font-size:24.5px;line-height:32px;color:#1f1f1f;left:1081.40px;transform:scaleX(0.8857);transform-origin:left center;">%</div>
<div class="t" style="top:380px;font-size:24.5px;line-height:32px;color:#1f1f1f;left:1294.00px;letter-spacing:0.548px;">Margin</div>
<div class="t" style="top:410px;font-size:22.4px;line-height:29px;color:#1f1f1f;left:1295.09px;transform:scaleX(0.9142);transform-origin:left center;">in Thousands</div>
<div class="t" style="top:393px;font-size:24.5px;line-height:32px;color:#1f1f1f;left:1615.40px;letter-spacing:0.388px;white-space:pre;">Margin </div>
<div class="t" style="top:393px;font-size:24.5px;line-height:32px;color:#1f1f1f;left:1699.70px;transform:scaleX(0.9333);transform-origin:left center;">%</div>
<div class="t" style="top:380px;font-size:24.5px;line-height:32px;color:#1f1f1f;left:1874.31px;transform:scaleX(0.944);transform-origin:left center;">Forec...</div>
<div class="t" style="top:410px;font-size:22.4px;line-height:29px;color:#1f1f1f;left:1875.30px;transform:scaleX(0.9032);transform-origin:left center;">in Thou...</div>
<div class="t" style="top:481px;font-size:24.7px;line-height:32px;color:#1f1f1f;left:34.90px;letter-spacing:-0.207px;">Projectors &amp; Screens</div>
<div class="t m" style="top:484px;font-size:19.8px;line-height:26px;color:#222;right:1592.40px;text-align:right;">5,947</div>
<div class="t m" style="top:482px;font-size:23.3px;line-height:30px;color:#1f1f1f;right:1491.70px;text-align:right;letter-spacing:-0.48px;">4,974</div>
<div class="t m" style="top:482px;font-size:23.3px;line-height:30px;color:#1f1f1f;right:1347.50px;text-align:right;letter-spacing:-0.48px;">972,566</div>
<div class="t m" style="top:482px;font-size:23.3px;line-height:30px;color:#1f1f1f;right:344.50px;text-align:right;letter-spacing:-0.48px;">8,741</div>
<div class="t m" style="top:478px;font-size:23.3px;line-height:30px;color:#1f1f1f;left:1017.41px;letter-spacing:-0.48px;">19.6</div>
<div class="t m" style="top:479px;font-size:23.3px;line-height:30px;color:#1f1f1f;left:1425.89px;letter-spacing:-0.48px;">1,435</div>
<div class="t m" style="top:478px;font-size:23.3px;line-height:30px;color:#1f1f1f;left:1723.62px;letter-spacing:-0.48px;">24.1</div>
<div class="t" style="top:513px;font-size:24.7px;line-height:32px;color:#1f1f1f;left:34.90px;letter-spacing:0.098px;">Laptops</div>
<div class="t m" style="top:516px;font-size:19.8px;line-height:26px;color:#222;right:1592.40px;text-align:right;">3,772</div>
<div class="t m" style="top:514px;font-size:23.3px;line-height:30px;color:#1f1f1f;right:1491.70px;text-align:right;letter-spacing:-0.48px;">3,104</div>
<div class="t m" style="top:514px;font-size:23.3px;line-height:30px;color:#1f1f1f;right:1347.50px;text-align:right;letter-spacing:-0.48px;">668,170</div>
<div class="t m" style="top:514px;font-size:23.3px;line-height:30px;color:#1f1f1f;right:344.50px;text-align:right;letter-spacing:-0.48px;">4,677</div>
<div class="t m" style="top:511px;font-size:23.3px;line-height:30px;color:#1f1f1f;left:1019.72px;letter-spacing:-0.48px;">21.5</div>
<div class="t m" style="top:511px;font-size:23.3px;line-height:30px;color:#1f1f1f;left:1409.78px;letter-spacing:-0.48px;">1,062</div>
<div class="t m" style="top:511px;font-size:23.3px;line-height:30px;color:#1f1f1f;left:1729.68px;letter-spacing:-0.48px;">28.2</div>
<div class="t" style="top:546px;font-size:24.7px;line-height:32px;color:#1f1f1f;left:36.90px;transform:scaleX(0.9618);transform-origin:left center;">Washers &amp; Dryers</div>
<div class="t m" style="top:549px;font-size:19.8px;line-height:26px;color:#222;right:1592.40px;text-align:right;">3,334</div>
<div class="t m" style="top:547px;font-size:23.3px;line-height:30px;color:#1f1f1f;right:1491.70px;text-align:right;letter-spacing:-0.48px;">1,755</div>
<div class="t m" style="top:547px;font-size:23.3px;line-height:30px;color:#1f1f1f;right:1347.50px;text-align:right;letter-spacing:-0.48px;">1,579,519</div>
<div class="t m" style="top:547px;font-size:23.3px;line-height:30px;color:#1f1f1f;right:344.50px;text-align:right;letter-spacing:-0.48px;">4,701</div>
<div class="t m" style="top:543px;font-size:23.3px;line-height:30px;color:#1f1f1f;left:1102.95px;letter-spacing:-0.48px;">90.0</div>
<div class="t m" style="top:543px;font-size:23.3px;line-height:30px;color:#1f1f1f;left:1377.77px;letter-spacing:-0.48px;">321</div>
<div class="t m" style="top:543px;font-size:23.3px;line-height:30px;color:#1f1f1f;left:1702.19px;letter-spacing:-0.48px;">9.6</div>
<div class="t" style="top:578px;font-size:24.7px;line-height:32px;color:#1f1f1f;left:35.40px;letter-spacing:0.640px;">Monitors</div>
<div class="t m" style="top:581px;font-size:19.8px;line-height:26px;color:#222;right:1592.40px;text-align:right;">2,156</div>
<div class="t m" style="top:579px;font-size:23.3px;line-height:30px;color:#1f1f1f;right:1491.70px;text-align:right;letter-spacing:-0.48px;">1,732</div>
<div class="t m" style="top:579px;font-size:23.3px;line-height:30px;color:#1f1f1f;right:1347.50px;text-align:right;letter-spacing:-0.48px;">423,791</div>
<div class="t m" style="top:579px;font-size:23.3px;line-height:30px;color:#1f1f1f;right:344.50px;text-align:right;letter-spacing:-0.48px;">259</div>
<div class="t m" style="top:576px;font-size:23.3px;line-height:30px;color:#1f1f1f;left:1023.37px;letter-spacing:-0.48px;">24.5</div>
<div class="t m" style="top:576px;font-size:23.3px;line-height:30px;color:#1f1f1f;left:1365.50px;letter-spacing:-0.48px;">37</div>
<div class="t m" style="top:576px;font-size:23.3px;line-height:30px;color:#1f1f1f;left:1692.40px;letter-spacing:-0.48px;">1.7</div>
<div class="t" style="top:611px;font-size:24.7px;line-height:32px;color:#1f1f1f;left:35.40px;">Refrigerators</div>
<div class="t m" style="top:614px;font-size:19.8px;line-height:26px;color:#222;right:1592.40px;text-align:right;">2,001</div>
<div class="t m" style="top:612px;font-size:23.3px;line-height:30px;color:#1f1f1f;right:1491.70px;text-align:right;letter-spacing:-0.48px;">1,048</div>
<div class="t m" style="top:612px;font-size:23.3px;line-height:30px;color:#1f1f1f;right:1347.50px;text-align:right;letter-spacing:-0.48px;">953,483</div>
<div class="t m" style="top:612px;font-size:23.3px;line-height:30px;color:#1f1f1f;right:344.50px;text-align:right;letter-spacing:-0.48px;">1,241</div>
<div class="t m" style="top:608px;font-size:23.3px;line-height:30px;color:#1f1f1f;left:1104.16px;letter-spacing:-0.48px;">91.0</div>
<div class="t m" style="top:608px;font-size:23.3px;line-height:30px;color:#1f1f1f;right:996.82px;text-align:right;letter-spacing:-0.48px;">-725</div>
<div class="t m" style="top:608px;font-size:23.3px;line-height:30px;color:#1f1f1f;right:713.18px;text-align:right;letter-spacing:-0.48px;">-36.2</div>
<div class="t" style="top:643px;font-size:24.7px;line-height:32px;color:#1f1f1f;left:35.40px;letter-spacing:-0.252px;">Desktops</div>
<div class="t m" style="top:646px;font-size:19.8px;line-height:26px;color:#222;right:1592.40px;text-align:right;">1,693</div>
<div class="t m" style="top:644px;font-size:23.3px;line-height:30px;color:#1f1f1f;right:1491.70px;text-align:right;letter-spacing:-0.48px;">1,427</div>
<div class="t m" style="top:644px;font-size:23.3px;line-height:30px;color:#1f1f1f;right:1347.50px;text-align:right;letter-spacing:-0.48px;">266,374</div>
<div class="t m" style="top:644px;font-size:23.3px;line-height:30px;color:#1f1f1f;right:344.50px;text-align:right;letter-spacing:-0.48px;">356</div>
<div class="t m" style="top:641px;font-size:23.3px;line-height:30px;color:#1f1f1f;left:1016.32px;letter-spacing:-0.48px;">18.7</div>
<div class="t m" style="top:641px;font-size:23.3px;line-height:30px;color:#1f1f1f;left:1375.43px;letter-spacing:-0.48px;">267</div>
<div class="t m" style="top:641px;font-size:23.3px;line-height:30px;color:#1f1f1f;left:1711.35px;letter-spacing:-0.48px;">15.8</div>
<div class="t" style="top:676px;font-size:24.7px;line-height:32px;color:#1f1f1f;left:35.47px;transform:scaleX(0.9642);transform-origin:left center;">Printers, Scanners &amp; Fax</div>
<div class="t m" style="top:679px;font-size:19.8px;line-height:26px;color:#222;right:1592.40px;text-align:right;">1,220</div>
<div class="t m" style="top:677px;font-size:23.3px;line-height:30px;color:#1f1f1f;right:1491.70px;text-align:right;letter-spacing:-0.48px;">1,001</div>
<div class="t m" style="top:677px;font-size:23.3px;line-height:30px;color:#1f1f1f;right:1347.50px;text-align:right;letter-spacing:-0.48px;">219,277</div>
<div class="t m" style="top:677px;font-size:23.3px;line-height:30px;color:#1f1f1f;right:344.50px;text-align:right;letter-spacing:-0.48px;">2,623</div>
<div class="t m" style="top:673px;font-size:23.3px;line-height:30px;color:#1f1f1f;left:1020.21px;letter-spacing:-0.48px;">21.9</div>
<div class="t m" style="top:673px;font-size:23.3px;line-height:30px;color:#1f1f1f;right:967.36px;text-align:right;letter-spacing:-0.48px;">-43</div>
<div class="t m" style="top:673px;font-size:23.3px;line-height:30px;color:#1f1f1f;right:664.78px;text-align:right;letter-spacing:-0.48px;">-3.5</div>
<div class="t" style="top:708px;font-size:24.7px;line-height:32px;color:#1f1f1f;left:36.30px;letter-spacing:-0.097px;">Coffee Machines</div>
<div class="t m" style="top:711px;font-size:19.8px;line-height:26px;color:#222;right:1592.40px;text-align:right;">1,036</div>
<div class="t m" style="top:709px;font-size:23.3px;line-height:30px;color:#1f1f1f;right:1491.70px;text-align:right;letter-spacing:-0.48px;">560</div>
<div class="t m" style="top:709px;font-size:23.3px;line-height:30px;color:#1f1f1f;right:1347.50px;text-align:right;letter-spacing:-0.48px;">475,878</div>
<div class="t m" style="top:709px;font-size:23.3px;line-height:30px;color:#1f1f1f;right:344.50px;text-align:right;letter-spacing:-0.48px;">860</div>
<div class="t m" style="top:705px;font-size:23.3px;line-height:30px;color:#1f1f1f;left:1096.75px;letter-spacing:-0.48px;">84.9</div>
<div class="t m" style="top:706px;font-size:23.3px;line-height:30px;color:#1f1f1f;right:966.75px;text-align:right;letter-spacing:-0.48px;">-29</div>
<div class="t m" style="top:705px;font-size:23.3px;line-height:30px;color:#1f1f1f;right:663.74px;text-align:right;letter-spacing:-0.48px;">-2.8</div>
<div class="t" style="top:740px;font-size:24.7px;line-height:32px;color:#1f1f1f;left:35.30px;letter-spacing:-0.464px;">Lamps</div>
<div class="t m" style="top:743px;font-size:19.8px;line-height:26px;color:#222;right:1592.40px;text-align:right;">988</div>
<div class="t m" style="top:741px;font-size:23.3px;line-height:30px;color:#1f1f1f;right:1491.70px;text-align:right;letter-spacing:-0.48px;">518</div>
<div class="t m" style="top:741px;font-size:23.3px;line-height:30px;color:#1f1f1f;right:1347.50px;text-align:right;letter-spacing:-0.48px;">470,833</div>
<div class="t m" style="top:741px;font-size:23.3px;line-height:30px;color:#1f1f1f;right:344.50px;text-align:right;letter-spacing:-0.48px;">1,226</div>
<div class="t m" style="top:738px;font-size:23.3px;line-height:30px;color:#1f1f1f;left:1104.16px;letter-spacing:-0.48px;">91.0</div>
<div class="t m" style="top:738px;font-size:23.3px;line-height:30px;color:#1f1f1f;left:1394.87px;letter-spacing:-0.48px;">717</div>
<div class="t m" style="top:738px;font-size:23.3px;line-height:30px;color:#1f1f1f;left:1795.15px;letter-spacing:-0.48px;">72.5</div>
<div class="t" style="top:773px;font-size:24.7px;line-height:32px;color:#1f1f1f;left:37.30px;letter-spacing:-0.324px;">Water Heaters</div>
<div class="t m" style="top:776px;font-size:19.8px;line-height:26px;color:#222;right:1592.40px;text-align:right;">791</div>
<div class="t m" style="top:774px;font-size:23.3px;line-height:30px;color:#1f1f1f;right:1491.70px;text-align:right;letter-spacing:-0.48px;">347</div>
<div class="t m" style="top:774px;font-size:23.3px;line-height:30px;color:#1f1f1f;right:1347.50px;text-align:right;letter-spacing:-0.48px;">443,343</div>
<div class="t m" style="top:774px;font-size:23.3px;line-height:30px;color:#1f1f1f;right:344.50px;text-align:right;letter-spacing:-0.48px;">1,194</div>
<div class="t m" style="top:770px;font-size:23.3px;line-height:30px;color:#1f1f1f;left:1148.63px;letter-spacing:-0.48px;">127.6</div>
<div class="t m" style="top:771px;font-size:23.3px;line-height:30px;color:#1f1f1f;left:1370.38px;letter-spacing:-0.48px;">150</div>
<div class="t m" style="top:770px;font-size:23.3px;line-height:30px;color:#1f1f1f;left:1716.08px;letter-spacing:-0.48px;">19.0</div>
<div class="t" style="top:805px;font-size:24.7px;line-height:32px;color:#1f1f1f;left:36.30px;letter-spacing:-0.402px;">Computers Accessories</div>
<div class="t m" style="top:808px;font-size:19.8px;line-height:26px;color:#222;right:1592.40px;text-align:right;">700</div>
<div class="t m" style="top:806px;font-size:23.3px;line-height:30px;color:#1f1f1f;right:1491.70px;text-align:right;letter-spacing:-0.48px;">572</div>
<div class="t m" style="top:806px;font-size:23.3px;line-height:30px;color:#1f1f1f;right:1347.50px;text-align:right;letter-spacing:-0.48px;">127,806</div>
<div class="t m" style="top:806px;font-size:23.3px;line-height:30px;color:#1f1f1f;right:344.50px;text-align:right;letter-spacing:-0.48px;">329</div>
<div class="t m" style="top:803px;font-size:23.3px;line-height:30px;color:#1f1f1f;left:1020.69px;letter-spacing:-0.48px;">22.3</div>
<div class="t m" style="top:803px;font-size:23.3px;line-height:30px;color:#1f1f1f;right:970.17px;text-align:right;letter-spacing:-0.48px;">-108</div>
<div class="t m" style="top:803px;font-size:23.3px;line-height:30px;color:#1f1f1f;right:682.39px;text-align:right;letter-spacing:-0.48px;">-15.4</div>
<div class="t" style="top:838px;font-size:24.7px;line-height:32px;color:#1f1f1f;left:35.30px;letter-spacing:-0.042px;">Microwaves</div>
<div class="t m" style="top:841px;font-size:19.8px;line-height:26px;color:#222;right:1592.40px;text-align:right;">629</div>
<div class="t m" style="top:839px;font-size:23.3px;line-height:30px;color:#1f1f1f;right:1491.70px;text-align:right;letter-spacing:-0.48px;">310</div>
<div class="t m" style="top:839px;font-size:23.3px;line-height:30px;color:#1f1f1f;right:1347.50px;text-align:right;letter-spacing:-0.48px;">319,179</div>
<div class="t m" style="top:839px;font-size:23.3px;line-height:30px;color:#1f1f1f;right:344.50px;text-align:right;letter-spacing:-0.48px;">296</div>
<div class="t m" style="top:835px;font-size:23.3px;line-height:30px;color:#1f1f1f;left:1118.62px;letter-spacing:-0.48px;">102.9</div>
<div class="t m" style="top:836px;font-size:23.3px;line-height:30px;color:#1f1f1f;left:1364.81px;letter-spacing:-0.48px;">21</div>
<div class="t m" style="top:835px;font-size:23.3px;line-height:30px;color:#1f1f1f;left:1693.03px;letter-spacing:-0.48px;">3.4</div>
<div class="t" style="top:870px;font-size:24.7px;line-height:32px;color:#1f1f1f;left:37.30px;letter-spacing:0.074px;">Air Conditioners</div>
<div class="t m" style="top:873px;font-size:19.8px;line-height:26px;color:#222;right:1592.40px;text-align:right;">600</div>
<div class="t m" style="top:871px;font-size:23.3px;line-height:30px;color:#1f1f1f;right:1491.70px;text-align:right;letter-spacing:-0.48px;">347</div>
<div class="t m" style="top:871px;font-size:23.3px;line-height:30px;color:#1f1f1f;right:1347.50px;text-align:right;letter-spacing:-0.48px;">252,718</div>
<div class="t m" style="top:871px;font-size:23.3px;line-height:30px;color:#1f1f1f;right:344.50px;text-align:right;letter-spacing:-0.48px;">630</div>
<div class="t m" style="top:868px;font-size:23.3px;line-height:30px;color:#1f1f1f;left:1082.05px;letter-spacing:-0.48px;">72.8</div>
<div class="t m" style="top:868px;font-size:23.3px;line-height:30px;color:#1f1f1f;left:1378.20px;letter-spacing:-0.48px;">331</div>
<div class="t m" style="top:868px;font-size:23.3px;line-height:30px;color:#1f1f1f;left:1769.44px;letter-spacing:-0.48px;">55.1</div>
<div class="t" style="top:903px;font-size:24.7px;line-height:32px;color:#1f1f1f;left:35.45px;transform:scaleX(0.9231);transform-origin:left center;">Fans</div>
<div class="t m" style="top:906px;font-size:19.8px;line-height:26px;color:#222;right:1592.40px;text-align:right;">185</div>
<div class="t m" style="top:904px;font-size:23.3px;line-height:30px;color:#1f1f1f;right:1491.70px;text-align:right;letter-spacing:-0.48px;">101</div>
<div class="t m" style="top:904px;font-size:23.3px;line-height:30px;color:#1f1f1f;right:1347.50px;text-align:right;letter-spacing:-0.48px;">83,370</div>
<div class="t m" style="top:904px;font-size:23.3px;line-height:30px;color:#1f1f1f;right:344.50px;text-align:right;letter-spacing:-0.48px;">194</div>
<div class="t m" style="top:900px;font-size:23.3px;line-height:30px;color:#1f1f1f;left:1093.47px;letter-spacing:-0.48px;">82.2</div>
<div class="t m" style="top:900px;font-size:23.3px;line-height:30px;color:#1f1f1f;right:968.39px;text-align:right;letter-spacing:-0.48px;">-67</div>
<div class="t m" style="top:900px;font-size:23.3px;line-height:30px;color:#1f1f1f;right:713.47px;text-align:right;letter-spacing:-0.48px;">-36.4</div>
</main>
<footer class="statusbar">
<div class="b" style="left:4px;top:1237.8px;width:2291px;height:1.6px;background:#dedede;"></div>
<div class="t" style="top:1248px;font-size:22.3px;line-height:29px;color:#333;left:4.00px;transform:scaleX(0.9478);transform-origin:left center;">Total rows: 14</div>
<div class="t" style="top:1248px;font-size:22.3px;line-height:29px;color:#333;left:1002.66px;transform:scaleX(0.9352);transform-origin:left center;">Rows per page:</div>
<div class="b" style="left:1157px;top:1247px;width:94px;height:36px;border:1px solid #d0d0d0;box-sizing:border-box;background:#fff;"></div>
<div class="t" style="top:1251px;font-size:22.3px;line-height:29px;color:#333;left:1177.70px;transform:scaleX(0.9318);transform-origin:left center;">All</div>
<div class="b" style="left:2116.5px;top:1248.6px;width:100px;height:36px;border:1px solid #d4d4d4;box-sizing:border-box;background:#fff;"></div>
<div class="t" style="top:1252px;font-size:22.3px;line-height:29px;color:#333;left:2139.65px;transform:scaleX(0.9537);transform-origin:left center;">100%</div>
<svg width="2304" height="1293" viewBox="0 0 2304 1293"><path d="M1211.3 1259.0 L1221.7 1268.8 L1232.1 1259.0" fill="none" stroke="#333" stroke-width="1.5"/>
<path d="M2083.8 1265.6 H2101.6" stroke="#333" stroke-width="2" fill="none"/>
<path d="M2226 1266.3 H2245 M2235.5 1256.8 V1275.8" stroke="#333" stroke-width="2" fill="none"/>
<rect x="2263" y="1271" width="8.0" height="7.6" fill="#ff3b3b" stroke="none" stroke-width="1.5"/>
<rect x="2275" y="1258.7" width="8.0" height="19.9" fill="#ffb000" stroke="none" stroke-width="1.5"/>
<rect x="2287.2" y="1246.8" width="7.8" height="31.8" fill="#58c94e" stroke="none" stroke-width="1.5"/>
<rect x="2263.8" y="1247.7" width="6.2" height="5.8" fill="#cfcfcf" stroke="none" stroke-width="1.5"/>
<rect x="2275.8" y="1247.7" width="6.5" height="5.8" fill="#cfcfcf" stroke="none" stroke-width="1.5"/>
<rect x="2263.8" y="1260" width="6.2" height="5.8" fill="#cfcfcf" stroke="none" stroke-width="1.5"/></svg>
</footer>
</body></html>
